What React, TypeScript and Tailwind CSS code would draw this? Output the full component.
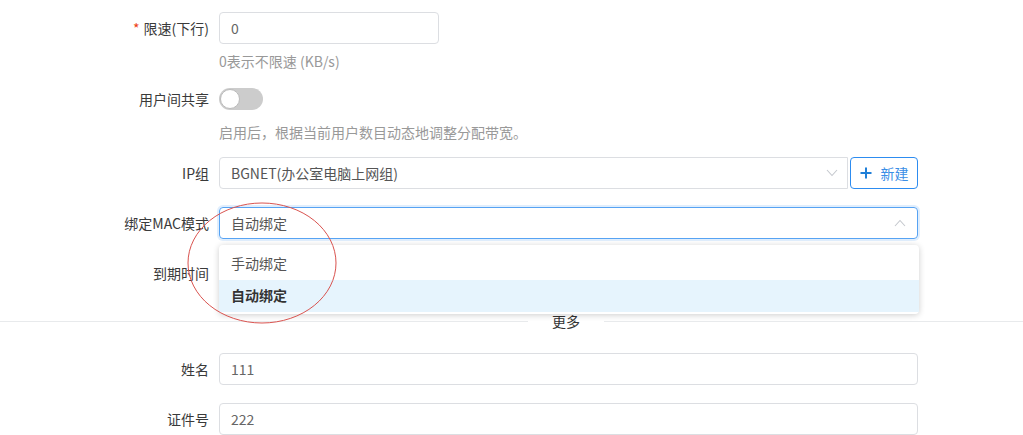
const font = { fontFamily: '"Noto Sans CJK SC", "Liberation Sans", sans-serif' };

const Label = ({ children, required }: { children: React.ReactNode; required?: boolean }) => (
    <div className="w-[219px] shrink-0 pr-[10px] text-right text-[14px] leading-[32px] text-[#3a3a3a]">
        {required && <span className="text-[#ed4014] mr-[4px]">*</span>}
        {children}
    </div>
);

const Chevron = ({ up }: { up?: boolean }) => (
    <svg width="12" height="8" viewBox="0 0 12 8" className="shrink-0">
        <path d={up ? "M1 7 L6 1.5 L11 7" : "M1 1 L6 6.5 L11 1"} fill="none" stroke="#c5c8ce" strokeWidth="1.1"/>
    </svg>
);

const App = () => {
    return <div className="relative w-[1023px] h-[435px] overflow-hidden bg-white" style={font}>
        {/* 限速 */}
        <div className="flex pt-[12px]">
            <Label required>限速(下行)</Label>
            <div className="w-[220px] h-[32px] border border-[#dcdee2] rounded-[4px] px-[11px] text-[14px] leading-[30px] text-[#666]">0</div>
        </div>
        <div className="flex mt-[7px]">
            <div className="w-[219px]"/>
            <div className="text-[14px] leading-[20px] text-[#999]">0表示不限速 (KB/s)</div>
        </div>

        {/* 用户间共享 */}
        <div className="flex items-center mt-[17px] h-[22px]">
            <Label>用户间共享</Label>
            <div className="relative w-[44px] h-[22px] rounded-full bg-[#ccc]">
                <div className="absolute left-[1px] top-[1px] w-[20px] h-[20px] rounded-full bg-white border border-[#bbb]"/>
            </div>
        </div>
        <div className="flex mt-[12px]">
            <div className="w-[219px]"/>
            <div className="text-[14px] leading-[20px] text-[#999]">启用后，根据当前用户数目动态地调整分配带宽。</div>
        </div>

        {/* IP组 */}
        <div className="flex mt-[15px]">
            <Label>IP组</Label>
            <div className="flex w-[699px] gap-[2px]">
                <div className="flex-1 h-[32px] border border-[#dcdee2] rounded-l-[4px] pl-[11px] pr-[9px] flex items-center justify-between text-[14px] text-[#555]">
                    <span>BGNET(办公室电脑上网组)</span>
                    <Chevron/>
                </div>
                <button className="w-[68px] h-[32px] border border-[#2d8cf0] rounded-[4px] flex items-center justify-center gap-[9px] text-[14px] text-[#3a8ee6]">
                    <svg width="12" height="12" viewBox="0 0 12 12"><path d="M6 0.5 V11.5 M0.5 6 H11.5" stroke="#1f7fd8" strokeWidth="2"/></svg>
                    新建
                </button>
            </div>
        </div>

        {/* 绑定MAC模式 */}
        <div className="flex mt-[18px]">
            <Label>绑定MAC模式</Label>
            <div className="w-[699px] h-[32px] border border-[#57a3f3] rounded-[4px] shadow-[0_0_0_2px_rgba(45,140,240,0.15)] pl-[11px] pr-[11px] flex items-center justify-between text-[14px] text-[#555]">
                <span>自动绑定</span>
                <Chevron up/>
            </div>
        </div>

        {/* 到期时间 */}
        <div className="flex mt-[18px]">
            <Label>到期时间</Label>
            <div className="w-[699px] h-[32px]"/>
        </div>

        {/* 更多 */}
        <div className="flex items-center mt-[22px] h-[20px]">
            <div className="w-[528px] h-px bg-[#e8eaec]"/>
            <div className="px-[24px] text-[14px] leading-[20px] text-[#333]">更多</div>
            <div className="flex-1 h-px bg-[#e8eaec]"/>
        </div>

        {/* 姓名 */}
        <div className="flex mt-[22px]">
            <Label>姓名</Label>
            <div className="w-[699px] h-[32px] border border-[#dcdee2] rounded-[4px] px-[11px] text-[14px] leading-[30px] text-[#666]">111</div>
        </div>
        <div className="flex mt-[18px]">
            <Label>证件号</Label>
            <div className="w-[699px] h-[32px] border border-[#dcdee2] rounded-[4px] px-[11px] text-[14px] leading-[30px] text-[#666]">222</div>
        </div>

        {/* dropdown */}
        <div className="absolute left-[219px] top-[245px] w-[700px] py-[2px] bg-white rounded-[4px] shadow-[0_1px_6px_rgba(0,0,0,0.2)] text-[14px]">
            <div className="h-[33px] leading-[32px] px-[12px] text-[#555]">手动绑定</div>
            <div className="h-[32px] leading-[31px] px-[12px] bg-[#e6f4fd] font-bold text-[#333]">自动绑定</div>
        </div>

        {/* annotation */}
        <svg className="absolute left-[186px] top-[201px]" width="152" height="124" viewBox="0 0 152 124">
            <ellipse cx="76" cy="62" rx="74" ry="60" fill="none" stroke="#d9534f" strokeWidth="1"/>
        </svg>
    </div>
}

export default App;
